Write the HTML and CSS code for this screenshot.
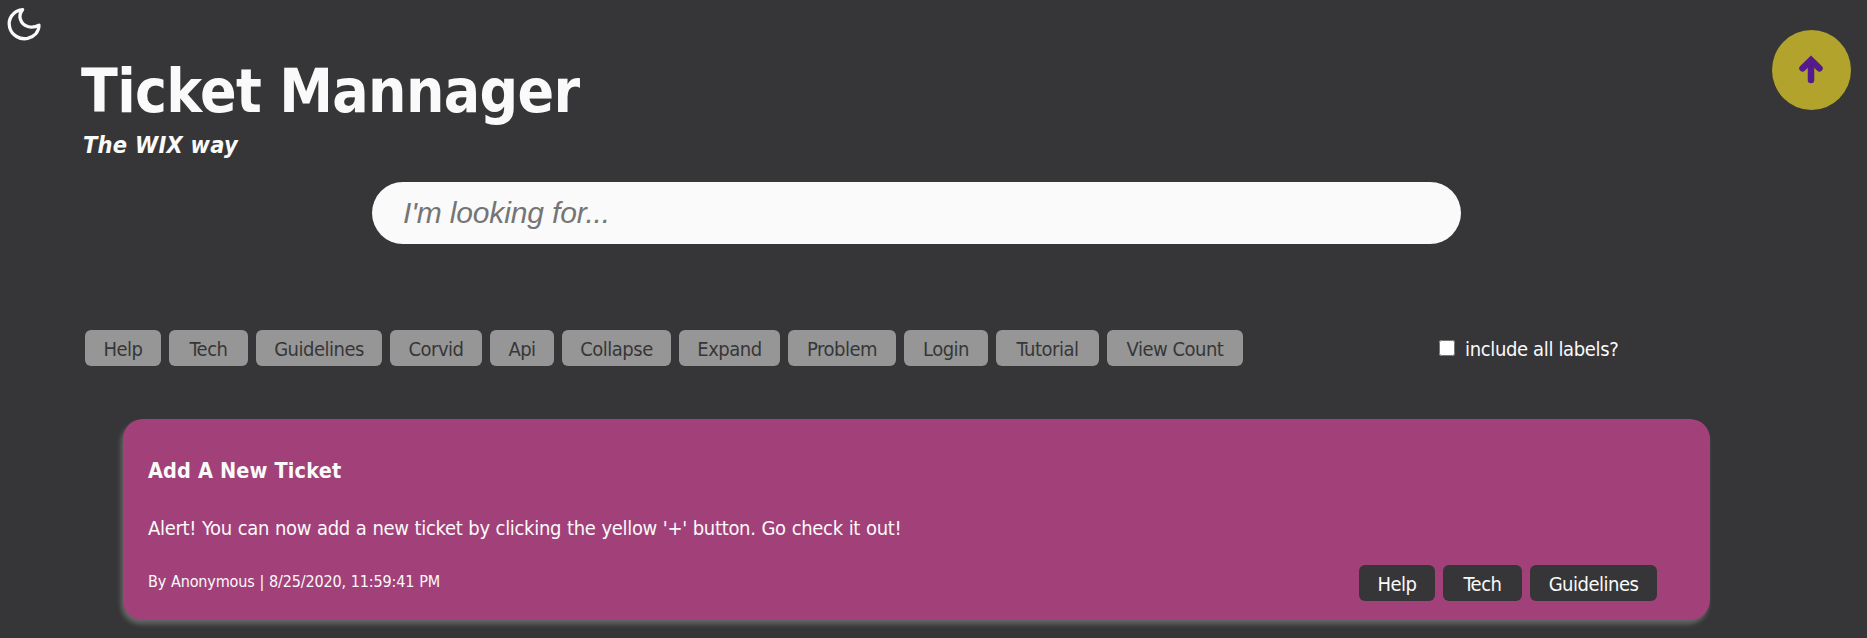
FILE: index.html
```html
<!DOCTYPE html>
<html lang="en">
<head>
<meta charset="utf-8">
<title>Ticket Mannager</title>
<link rel="stylesheet" href="styles.css">
</head>
<body>
<button class="theme" aria-label="Toggle theme">
<svg width="36" height="36" viewBox="0 0 36 36" fill="none" stroke="#fafafa" stroke-width="3.3" stroke-linejoin="round"><path d="M16.600 3.600C6.500 4.900 1.500 13.400 3.700 21.600C5.800 29.200 13.800 34.100 21.600 32.400C28.300 30.700 32.900 25.600 33 19.100C25.500 23.300 16.700 20.500 14.400 13.200C13.300 9.600 14.400 6.200 16.600 3.600Z"/></svg>
</button>
<a class="to-top" aria-label="Back to top"><svg width="26" height="30" viewBox="0 0 26 30" fill="none" stroke="#551a8b" stroke-width="6.500" stroke-linecap="round"><path d="M13 25V7"/><path d="M4.500 13.300L13 5L21.500 13.300" stroke-linejoin="miter"/></svg></a>
<header class="header">
<h1 class="title"><span>Ticket Mannager</span></h1>
<p class="subtitle">The WIX way</p>
<input class="search" type="text" placeholder="I'm looking for...">
</header>
<main>
<section class="filters">
<div class="labels">
<span class="chip">Help</span><span class="chip">Tech</span><span class="chip">Guidelines</span><span class="chip">Corvid</span><span class="chip">Api</span><span class="chip">Collapse</span><span class="chip">Expand</span><span class="chip">Problem</span><span class="chip">Login</span><span class="chip">Tutorial</span><span class="chip">View Count</span>
</div>
<label class="include"><input class="check" type="checkbox"><span>include all labels?</span></label>
</section>
<article class="ticket">
<h2 class="ticket-title">Add A New Ticket</h2>
<p class="ticket-body">Alert! You can now add a new ticket by clicking the yellow '+' button. Go check it out!</p>
<footer class="ticket-footer">
<span class="meta">By Anonymous | 8/25/2020, 11:59:41 PM</span>
<div class="ticket-labels"><span class="chip dark">Help</span><span class="chip dark">Tech</span><span class="chip dark">Guidelines</span></div>
</footer>
</article>
</main>
</body>
</html>
```
FILE: styles.css
```css
* { box-sizing: border-box; }
body {
  margin: 0;
  height: 638px;
  overflow: hidden;
  background: #363638;
  color: #fafafa;
  font: 20px/24px "DejaVu Sans Condensed", "DejaVu Sans", sans-serif;
  font-stretch: condensed;
  letter-spacing: -0.5px;
}
h1, h2, p { margin: 0; }
.theme {
  position: absolute;
  left: 6px;
  top: 6px;
  padding: 0;
  border: 0;
  background: none;
  line-height: 0;
}
.to-top {
  position: absolute;
  left: 1772px;
  top: 30px;
  width: 79px;
  height: 80px;
  padding-right: 2px;
  border-radius: 50%;
  background: #b1a32b;
  display: flex;
  align-items: center;
  justify-content: center;
}
.header {
  display: flex;
  flex-direction: column;
  padding: 55px 0 0 81px;
}
.title { font-size: 60px; line-height: 72px; letter-spacing: -0.65px; }
.subtitle {
  margin: 4px 0 0 2px;
  font-size: 23.4px;
  line-height: 28px;
  font-weight: bold;
  font-style: italic;
  letter-spacing: 0.25px;
}
.search {
  margin: 23px 0 0 291px;
  width: 1089px;
  height: 62px;
  border: 0;
  border-radius: 31px;
  padding: 0 31px;
  background: #fafafa;
  font: italic 30px "Liberation Sans", Arial, sans-serif;
  letter-spacing: -0.15px;
}
.search::placeholder { color: #757575; }
.filters { display: flex; margin: 86px 0 0 85px; height: 36px; }
.labels {
  display: grid;
  grid-template-columns: 76px 79px 126px 92px 64px 109px 101px 108px 84px 103px 136px;
  gap: 8px;
}
.chip {
  height: 36px;
  border-radius: 6px;
  background: #969696;
  color: #363638;
  line-height: 38px;
  text-align: center;
  white-space: nowrap;
}
.dark { background: #363638; color: #fafafa; }
.include { display: flex; align-items: center; margin-left: 196px; gap: 10px; letter-spacing: -0.35px; }
.include span { padding-top: 1px; }
.check { width: 16px; height: 16px; margin: 0; }
.ticket {
  margin: 53px 0 0 123px;
  width: 1587px;
  height: 201px;
  padding: 38px 53px 0 25px;
  border-radius: 20px;
  background: #a24179;
  box-shadow: -2px 4px 5px #666;
}
.ticket-title { font-size: 21.500px; line-height: 28px; letter-spacing: 0.15px; }
.ticket-body { margin-top: 31px; letter-spacing: -0.32px; word-spacing: 0.5px; }
.ticket-footer { display: flex; justify-content: space-between; margin-top: 25px; }
.meta { font-size: 16px; line-height: 33px; letter-spacing: -0.15px; word-spacing: 0.5px; }
.ticket-labels { display: grid; grid-template-columns: 76px 79px 127px; gap: 8px; }
```
